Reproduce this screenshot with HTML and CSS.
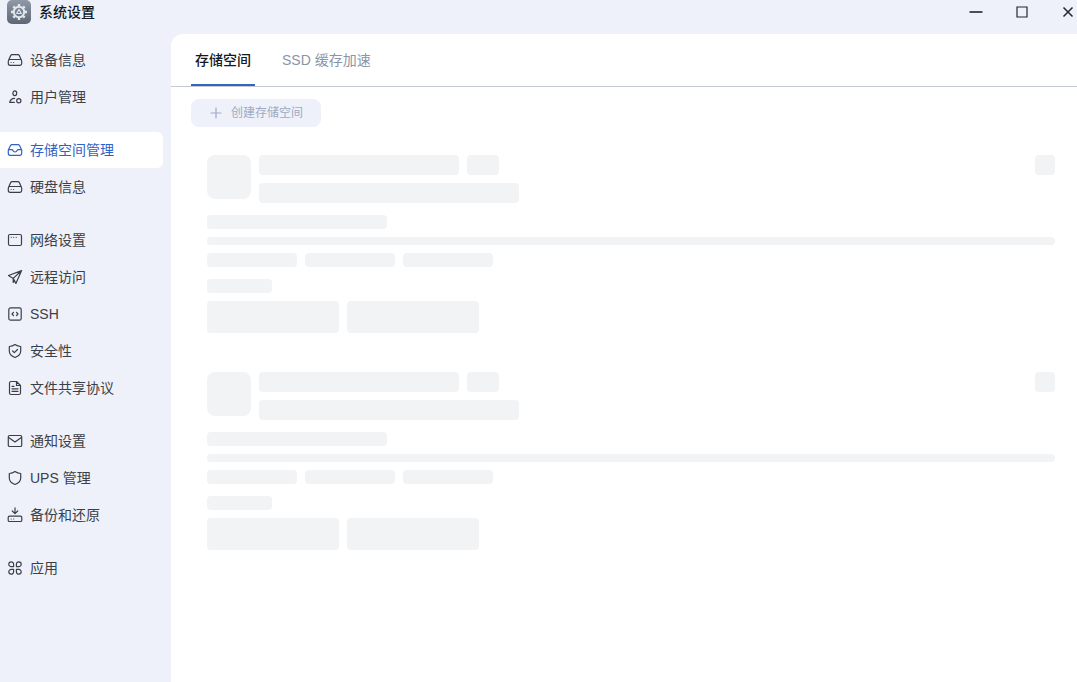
FILE: index.html
```html
<!DOCTYPE html>
<html lang="zh-CN">
<head>
<meta charset="utf-8">
<title>系统设置</title>
<link rel="stylesheet" href="styles.css">
</head>
<body>
<div class="window">
  <header class="titlebar">
    <svg class="app-icon" viewBox="0 0 24 24" aria-hidden="true">
      <defs><linearGradient id="app" x1="0" y1="0" x2="0" y2="1"><stop offset="0" stop-color="#9099a8"/><stop offset="1" stop-color="#5c6675"/></linearGradient></defs>
      <rect width="24" height="24" rx="5" fill="url(#app)"/>
      <g stroke="#e3e6ea" fill="none">
        <circle cx="12" cy="12" r="5.2" stroke-width="2"/>
        <path d="M12 4v2M12 18v2M4 12h2M18 12h2M6.300 6.300l1.500 1.500M16.200 16.200l1.500 1.500M17.700 6.300l-1.500 1.500M7.800 16.200l-1.500 1.500" stroke-width="2.400" stroke-linecap="butt"/>
        <path d="M12 9.500l2.300 4H9.700z" stroke-width="1.200"/>
      </g>
    </svg>
    <h1 class="title">系统设置</h1>
    <div class="controls">
      <button class="control" type="button" aria-label="最小化"><svg viewBox="0 0 14 14"><path d="M.5 7h13" stroke-width="1.600"/></svg></button>
      <button class="control" type="button" aria-label="最大化"><svg viewBox="0 0 14 14"><path d="M2 2h10v10H2z"/></svg></button>
      <button class="control" type="button" aria-label="关闭"><svg viewBox="0 0 14 14"><path d="M2.500 2.500l9 9M11.500 2.500l-9 9" stroke-width="1.500"/></svg></button>
    </div>
  </header>
  <div class="body">
    <nav class="sidebar">
      <div class="group">
        <a class="item" href="#"><svg class="icon" viewBox="0 0 16 16"><path d="M1.600 8.300L3.700 3.600Q4.100 2.600 5 2.600h6q.9 0 1.300 1l2.100 4.700M3 7.500h10q1.700 0 1.700 1.700v2.400q0 1.700-1.700 1.700H3q-1.700 0-1.700-1.700V9.200Q1.300 7.500 3 7.500zM4.100 10.500h.01M6.600 10.500h.01"/></svg>设备信息</a>
        <a class="item" href="#"><svg class="icon" viewBox="0 0 16 16"><ellipse cx="7.800" cy="4.300" rx="1.900" ry="2.400"/><path d="M7.600 9.300C5 9.300 3.200 10.800 2.700 13.400h4.600"/><circle cx="11.800" cy="11.800" r="2.100"/></svg>用户管理</a>
      </div>
      <div class="group">
        <a class="item active" href="#" aria-current="page"><svg class="icon" viewBox="0 0 16 16"><path d="M1.300 8L3.500 3.600Q4 2.600 5 2.600h6q1 0 1.500 1L14.700 8v3.600q0 1.700-1.700 1.700H3q-1.700 0-1.700-1.700zM1.500 7.700h3.200q.8 0 1.200.9.600 1.400 2.100 1.400t2.100-1.400q.4-.9 1.200-.9h3.200"/></svg>存储空间管理</a>
        <a class="item" href="#"><svg class="icon" viewBox="0 0 16 16"><path d="M1.600 8.300L3.700 3.600Q4.100 2.600 5 2.600h6q.9 0 1.300 1l2.100 4.700M3 7.500h10q1.700 0 1.700 1.700v2.400q0 1.700-1.700 1.700H3q-1.700 0-1.700-1.700V9.200Q1.300 7.500 3 7.500zM4.100 10.500h.01M6.600 10.500h.01"/></svg>硬盘信息</a>
      </div>
      <div class="group">
        <a class="item" href="#"><svg class="icon" viewBox="0 0 16 16"><rect x="1.500" y="2.500" width="13" height="11" rx="1.500"/><path d="M4.200 5.300h.01M6.700 5.300h.01M9.200 5.300h.01"/></svg>网络设置</a>
        <a class="item" href="#"><svg class="icon" viewBox="0 0 16 16"><path d="M14.600 1.600L1.500 6.500l4.700 2.900 2.700 5zM14.400 1.800L6.200 9.400v4l1.600-1.600"/></svg>远程访问</a>
        <a class="item" href="#"><svg class="icon" viewBox="0 0 16 16"><rect x="1.800" y="1.800" width="12.400" height="12.400" rx="1.800"/><path d="M6.500 6.300L5 8l1.500 1.700M9.500 6.300L11 8l-1.500 1.700"/></svg>SSH</a>
        <a class="item" href="#"><svg class="icon" viewBox="0 0 16 16"><path d="M8 1.500Q10.500 3.300 13.700 3.500V8c0 3.200-2 5.200-5.700 6.500C4.300 13.200 2.300 11.200 2.300 8V3.500Q5.500 3.300 8 1.500zM5.600 8l1.700 1.700 3.200-3.200"/></svg>安全性</a>
        <a class="item" href="#"><svg class="icon" viewBox="0 0 16 16"><path d="M9.500 1.500H4q-1.500 0-1.500 1.500v10q0 1.500 1.500 1.500h8q1.500 0 1.500-1.500V5.500zM9.500 1.700v3.800h3.900M5 6.300h2M5 8.800h6M5 11.300h6"/></svg>文件共享协议</a>
      </div>
      <div class="group">
        <a class="item" href="#"><svg class="icon" viewBox="0 0 16 16"><rect x="1.300" y="2.500" width="13.400" height="11" rx="1.300"/><path d="M1.600 4.500L8 9l6.400-4.500"/></svg>通知设置</a>
        <a class="item" href="#"><svg class="icon" viewBox="0 0 16 16"><path d="M8 1.500Q10.500 3.300 13.700 3.500V8c0 3.200-2 5.200-5.700 6.500C4.300 13.200 2.300 11.200 2.300 8V3.500Q5.500 3.300 8 1.500z"/></svg>UPS 管理</a>
        <a class="item" href="#"><svg class="icon" viewBox="0 0 16 16"><path d="M8 .8v5.700M5.300 4L8 6.700 10.700 4M4.200 12h.01M6.700 12h.01"/><rect x="1.200" y="9.200" width="13.600" height="5.300" rx="1.300"/></svg>备份和还原</a>
      </div>
      <div class="group">
        <a class="item" href="#"><svg class="icon" viewBox="0 0 16 16"><path d="M6.600 6.600H4.200A2.400 2.400 0 1 1 6.600 4.200zM9.400 6.600h2.400A2.400 2.400 0 1 0 9.400 4.200zM6.600 9.400H4.200a2.400 2.400 0 1 0 2.400 2.400zM9.400 9.400h2.400a2.400 2.400 0 1 1-2.400 2.400z"/></svg>应用</a>
      </div>
    </nav>
    <main class="main">
      <div class="tabs" role="tablist">
        <button class="tab selected" type="button" role="tab" aria-selected="true">存储空间</button>
        <button class="tab" type="button" role="tab" aria-selected="false">SSD 缓存加速</button>
      </div>
      <div class="toolbar">
        <button class="create" type="button" disabled><svg viewBox="0 0 12 12" aria-hidden="true"><path d="M6 1v10M1 6h10"/></svg>创建存储空间</button>
      </div>
      <div class="cards" aria-busy="true">
        <section class="card">
          <div class="row head">
            <span class="bone avatar"></span>
            <div class="lines">
              <div class="row"><span class="bone name"></span><span class="bone tag"></span></div>
              <span class="bone desc"></span>
            </div>
            <span class="bone more"></span>
          </div>
          <span class="bone usage"></span>
          <span class="bone bar"></span>
          <div class="row legend"><span class="bone key"></span><span class="bone key"></span><span class="bone key"></span></div>
          <span class="bone label"></span>
          <div class="row"><span class="bone disk"></span><span class="bone disk"></span></div>
        </section>
        <section class="card">
          <div class="row head">
            <span class="bone avatar"></span>
            <div class="lines">
              <div class="row"><span class="bone name"></span><span class="bone tag"></span></div>
              <span class="bone desc"></span>
            </div>
            <span class="bone more"></span>
          </div>
          <span class="bone usage"></span>
          <span class="bone bar"></span>
          <div class="row legend"><span class="bone key"></span><span class="bone key"></span><span class="bone key"></span></div>
          <span class="bone label"></span>
          <div class="row"><span class="bone disk"></span><span class="bone disk"></span></div>
        </section>
      </div>
    </main>
  </div>
</div>
</body>
</html>
```

FILE: styles.css
```css
* { box-sizing: border-box; }

body {
  margin: 0;
  font: 14px/20px "Liberation Sans", "Noto Sans CJK SC", sans-serif;
  color: #3b3f47;
}

button {
  border: 0;
  padding: 0;
  background: none;
  font: inherit;
  color: inherit;
}

svg {
  fill: none;
  stroke: currentColor;
  stroke-linecap: round;
  stroke-linejoin: round;
}

.window {
  display: flex;
  flex-direction: column;
  min-height: 100vh;
  background: #eef1f9;
}

.titlebar {
  display: flex;
  align-items: center;
  gap: 8px;
  padding: 0 2px 10px 7px;
}

.app-icon { width: 24px; height: 24px; stroke: none; }

.title {
  margin: 0;
  font-size: 14px;
  line-height: 24px;
  font-weight: 500;
  color: #15181e;
}

.controls {
  display: flex;
  gap: 32px;
  margin-left: auto;
  color: #23262e;
}

.control { height: 24px; }

.control svg {
  display: block;
  width: 14px;
  height: 14px;
  stroke-linecap: butt;
  stroke-linejoin: miter;
  stroke-width: 1.2;
}

.body { display: flex; flex: 1; }

.sidebar {
  flex: 0 0 171px;
  display: flex;
  flex-direction: column;
  gap: 17px;
  padding: 8px 8px 8px 0;
}

.group { display: flex; flex-direction: column; gap: 1px; }

.item {
  display: flex;
  align-items: center;
  gap: 7px;
  height: 36px;
  padding-left: 7px;
  border-radius: 0 6px 6px 0;
  color: inherit;
  text-decoration: none;
}

.item.active { background: #fff; color: #2f62c4; }

.icon { width: 16px; height: 16px; stroke-width: 1.2; }

.main {
  flex: 1;
  min-width: 0;
  background: #fff;
  border-top-left-radius: 12px;
}

.tabs {
  display: flex;
  gap: 23px;
  padding-left: 20px;
  border-bottom: 1px solid #c5c9d0;
}

.tab {
  height: 52px;
  padding: 2px 4px 0;
  border-bottom: 2px solid transparent;
  color: #8a95a8;
}

.tab.selected {
  border-color: #3564c2;
  color: #15181e;
  font-weight: 500;
}

.toolbar { padding: 12px 20px 28px; }

.create {
  display: flex;
  align-items: center;
  gap: 9px;
  height: 28px;
  padding: 0 18px 0 19px;
  border-radius: 8px;
  background: #eef1f9;
  color: #9daac3;
  font-size: 12px;
}

.create svg { width: 12px; height: 12px; stroke-width: 1.2; }

.cards {
  display: flex;
  flex-direction: column;
  gap: 39px;
  padding: 0 22px 24px 36px;
}

.card { display: flex; flex-direction: column; gap: 8px; }

.row { display: flex; gap: 8px; }

.head, .legend { margin-bottom: 4px; }

.lines { display: flex; flex-direction: column; gap: 8px; }

.bone { display: block; border-radius: 4px; background: #f2f3f5; }

.avatar { width: 44px; height: 44px; border-radius: 8px; }
.name { width: 200px; height: 20px; }
.tag { width: 32px; height: 20px; }
.desc { width: 260px; height: 20px; }
.more { width: 20px; height: 20px; margin-left: auto; }
.usage { width: 180px; height: 14px; }
.bar { height: 8px; }
.key { width: 90px; height: 14px; }
.label { width: 65px; height: 14px; }
.disk { width: 132px; height: 32px; }
```
